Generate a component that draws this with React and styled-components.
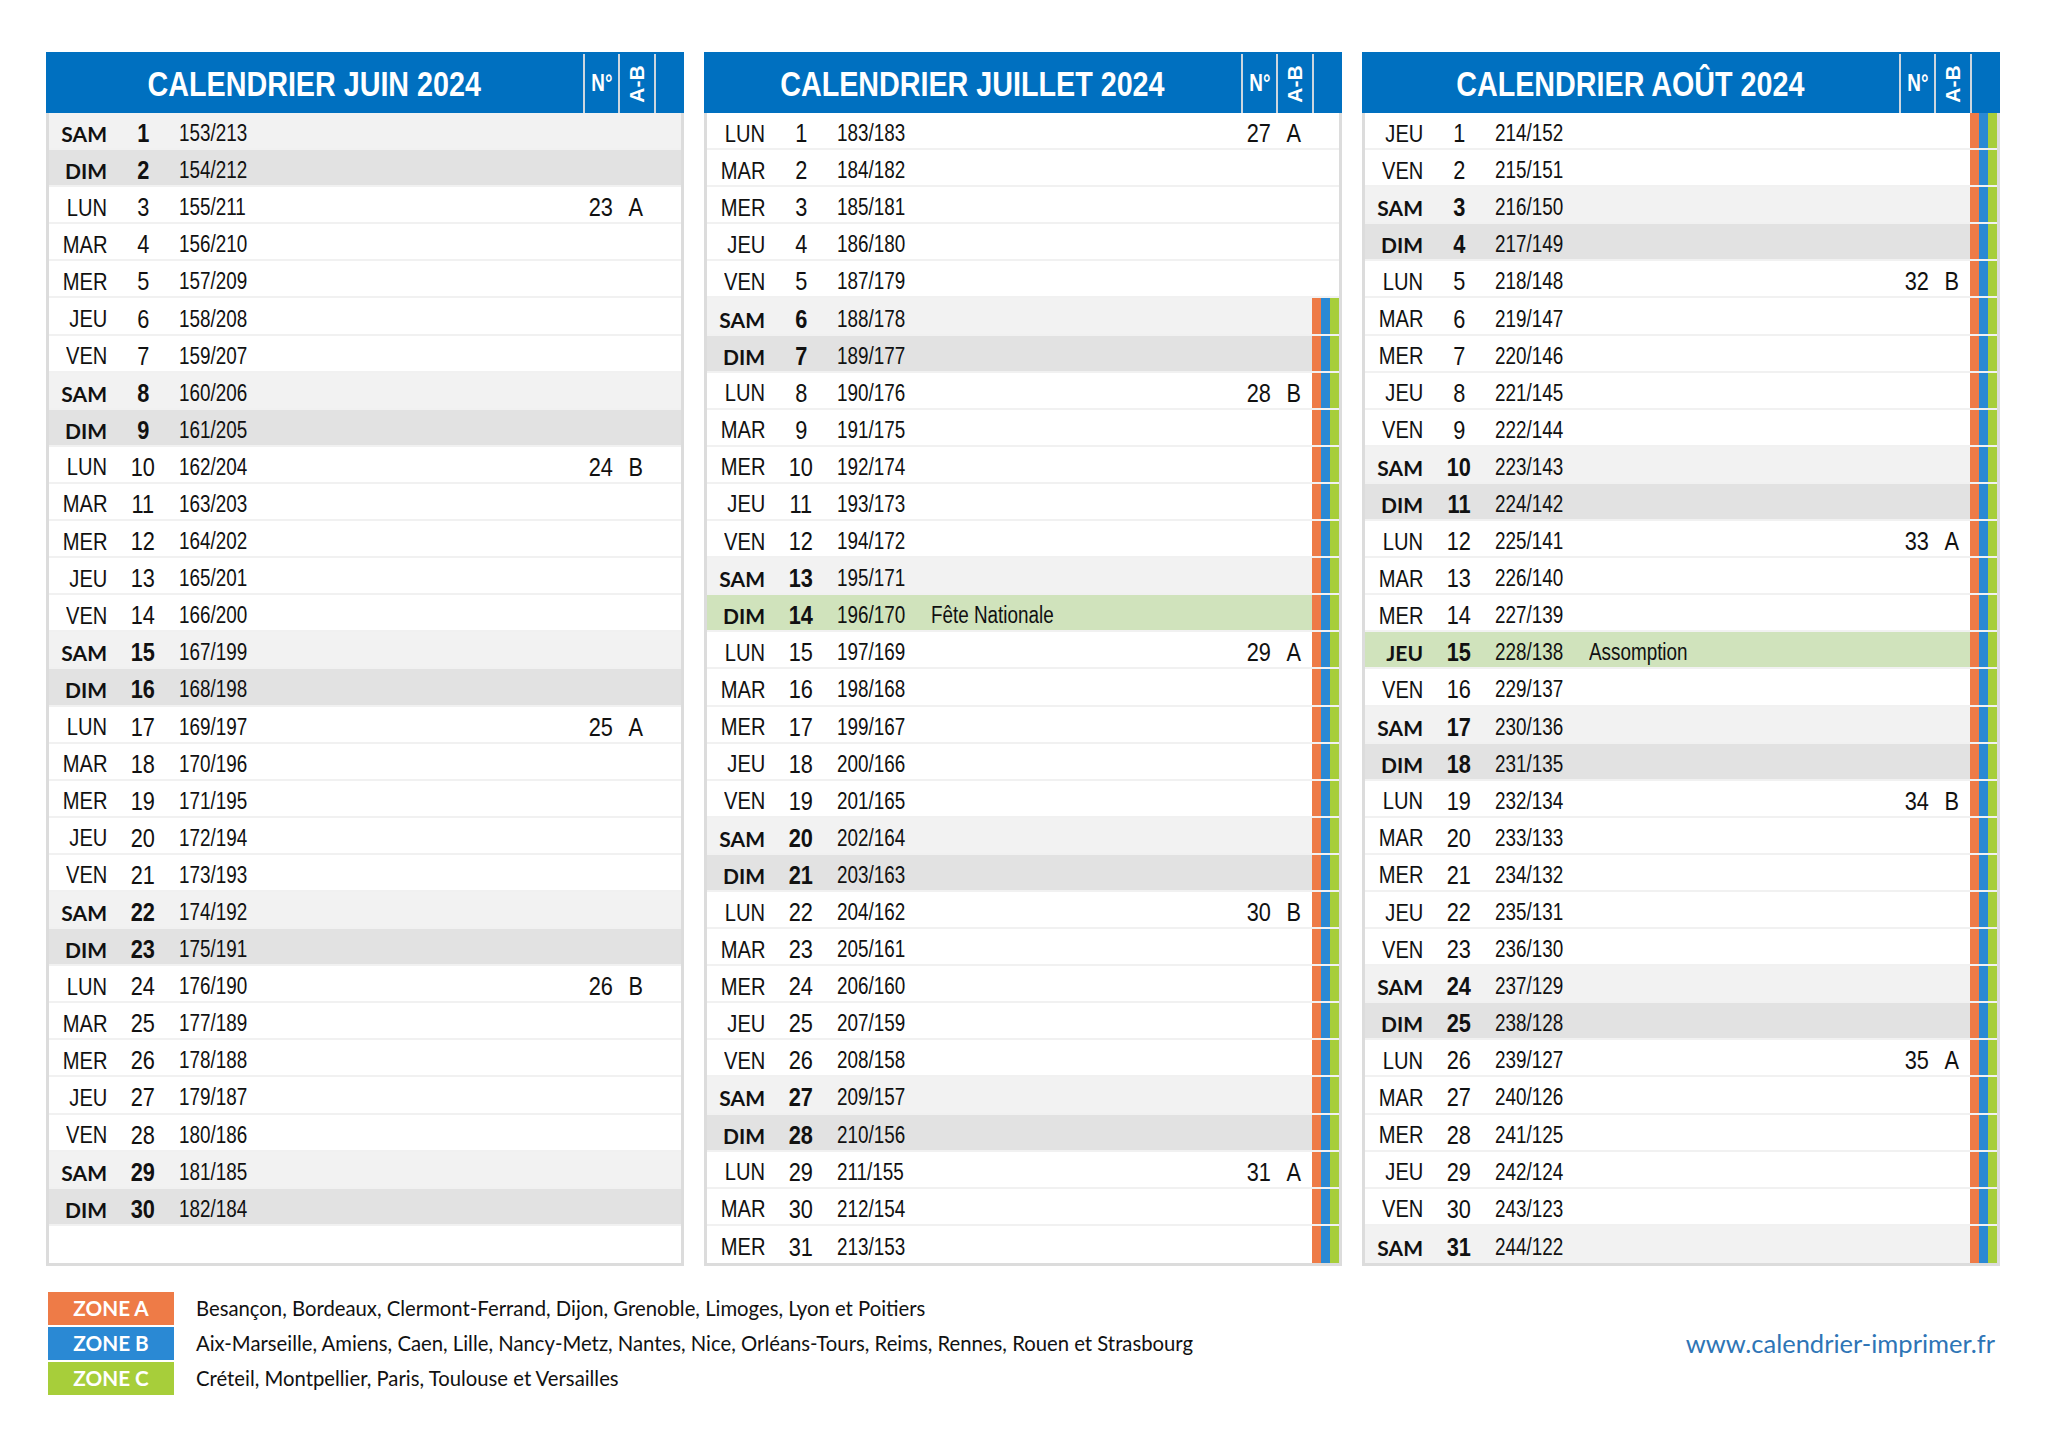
import React from "react";
import styled, { createGlobalStyle } from "styled-components";

const ARIAL = `"Liberation Sans", Arial, sans-serif`;
const CALIBRI = `Lato, "Open Sans", "Liberation Sans", sans-serif`;

const ORANGE = "#ee7b47";
const BLUE = "#2a89d4";
const GREEN = "#a7ce3a";

const GlobalStyle = createGlobalStyle`
  html, body { margin: 0; padding: 0; background: #ffffff; }
  body { font-family: ${ARIAL}; color: #111; }
`;

const Page = styled.div`
  width: 2048px;
  min-height: 1448px;
  box-sizing: border-box;
  padding: 52px 47px 0 46px;
  display: flex;
  flex-direction: column;
`;

const Panels = styled.div`
  display: grid;
  grid-template-columns: repeat(3, 638px);
  column-gap: 20px;
`;

const Panel = styled.section`
  display: flex;
  flex-direction: column;
`;

/* Arial Narrow look: condensed Liberation Sans */
const Cond = styled.span`
  display: inline-block;
  white-space: nowrap;
  transform: scaleX(0.82);
  transform-origin: ${(p) => p.$o || "left"} center;
`;

const Header = styled.header`
  height: 61px;
  background: #0070c0;
  display: flex;
  color: #fff;
`;

const Title = styled.h2`
  flex: 1;
  margin: 0;
  display: flex;
  align-items: center;
  justify-content: center;
  font-family: ${ARIAL};
  font-weight: 700;
  font-size: 35px;
  padding-top: 2px;
`;

const HeadCell = styled.div`
  width: ${(p) => p.$w}px;
  box-sizing: border-box;
  margin-top: 2px;
  border-left: 2px solid #cdd6df;
  display: flex;
  align-items: center;
  justify-content: center;
  font-family: ${ARIAL};
  font-weight: 700;
  font-size: 23px;
`;

const Rotated = styled.span`
  display: inline-block;
  transform: rotate(-90deg);
  white-space: nowrap;
  font-size: 21px;
`;

const Body = styled.div`
  border: 3px solid #dcdcdc;
  border-top: none;
  display: flex;
  flex-direction: column;
`;

const rowBg = (p) => {
  if (p.$holiday) return "#d0e3bc";
  if (p.$kind === "SAM") return "#f2f2f2";
  if (p.$kind === "DIM") return "#e2e2e2";
  return "#ffffff";
};

const Row = styled.div`
  height: 35.1px;
  border-bottom: 2px solid #f1f1f1;
  background: ${rowBg};
  display: flex;
  align-items: center;
  &:last-child { border-bottom: none; height: 37px; }
`;

const Cell = styled.div`
  padding-top: 6px;
`;

const DayName = styled(Cell)`
  width: 58px;
  text-align: right;
  font-family: ${(p) => (p.$bold ? CALIBRI : ARIAL)};
  font-weight: ${(p) => (p.$bold ? 700 : 400)};
  font-size: ${(p) => (p.$bold ? 21 : 24.5)}px;
`;

const DayNum = styled(Cell)`
  width: 44px;
  margin-left: 14px;
  text-align: center;
  font-weight: ${(p) => (p.$bold ? 700 : 400)};
  font-size: 26.5px;
`;

const Frac = styled(Cell)`
  width: 94px;
  margin-left: 14px;
  font-size: 23px;
`;

const Label = styled(Cell)`
  flex: 1;
  font-size: 23px;
`;

const Week = styled(Cell)`
  width: ${(p) => p.$w}px;
  text-align: center;
  font-size: 26.5px;
`;

const Stripes = styled.div`
  width: 27px;
  align-self: stretch;
  display: flex;
`;

const Stripe = styled.span`
  flex: 1;
  background: ${(p) => p.$c};
`;

const Legend = styled.div`
  margin-top: 26px;
  display: flex;
  align-items: center;
  justify-content: space-between;
  padding-right: 6px;
  padding-left: 2px;
`;

const Zones = styled.div`
  display: flex;
  flex-direction: column;
  gap: 2px;
`;

const ZoneRow = styled.div`
  display: flex;
  align-items: center;
  gap: 22px;
`;

const ZoneBox = styled.div`
  width: 126px;
  height: 33px;
  background: ${(p) => p.$c};
  color: #fff;
  font-family: ${CALIBRI};
  font-weight: 700;
  font-size: 20.7px;
  display: flex;
  align-items: center;
  justify-content: center;
`;

const ZoneText = styled.div`
  font-family: ${CALIBRI};
  font-size: 20.3px;
  color: #111;
`;

const Url = styled.div`
  font-family: ${CALIBRI};
  font-size: 25.5px;
  color: #2e75b6;
`;

const DAY_NAMES = ["DIM", "LUN", "MAR", "MER", "JEU", "VEN", "SAM"];

function isoWeek(date) {
  const d = new Date(Date.UTC(date.getFullYear(), date.getMonth(), date.getDate()));
  const dayNum = d.getUTCDay() || 7;
  d.setUTCDate(d.getUTCDate() + 4 - dayNum);
  const yearStart = new Date(Date.UTC(d.getUTCFullYear(), 0, 1));
  return Math.ceil(((d - yearStart) / 86400000 + 1) / 7);
}

function dayOfYear(date) {
  const start = new Date(date.getFullYear(), 0, 1);
  return Math.round((date - start) / 86400000) + 1;
}

const MONTHS = [
  { title: "CALENDRIER JUIN 2024", month: 5, days: 30, stripesFrom: null, holidays: {} },
  { title: "CALENDRIER JUILLET 2024", month: 6, days: 31, stripesFrom: 6, holidays: { 14: "Fête Nationale" } },
  { title: "CALENDRIER AOÛT 2024", month: 7, days: 31, stripesFrom: 1, holidays: { 15: "Assomption" } },
];

function buildRows(m) {
  const rows = [];
  for (let d = 1; d <= 31; d++) {
    if (d > m.days) {
      rows.push({ empty: true, key: d });
      continue;
    }
    const date = new Date(2024, m.month, d);
    const name = DAY_NAMES[date.getDay()];
    const doy = dayOfYear(date);
    const holiday = m.holidays[d];
    const weekend = name === "SAM" || name === "DIM";
    let week = null;
    let ab = null;
    if (name === "LUN") {
      week = isoWeek(date);
      ab = week % 2 === 1 ? "A" : "B";
    }
    rows.push({
      key: d,
      d,
      name,
      frac: `${doy}/${366 - doy}`,
      holiday,
      bold: weekend || !!holiday,
      week,
      ab,
      stripes: m.stripesFrom != null && d >= m.stripesFrom,
    });
  }
  return rows;
}

function MonthPanel({ m }) {
  const rows = buildRows(m);
  return (
    <Panel>
      <Header>
        <Title>
          <Cond $o="center">{m.title}</Cond>
        </Title>
        <HeadCell $w={35}>
          <Cond $o="center">N°</Cond>
        </HeadCell>
        <HeadCell $w={36}>
          <Rotated>A-B</Rotated>
        </HeadCell>
        <HeadCell $w={30} />
      </Header>
      <Body>
        {rows.map((r) =>
          r.empty ? (
            <Row key={r.key} />
          ) : (
            <Row key={r.key} $kind={r.name} $holiday={!!r.holiday}>
              <DayName $bold={r.bold}>
                {r.bold ? r.name : <Cond $o="right">{r.name}</Cond>}
              </DayName>
              <DayNum $bold={r.bold}>
                <Cond $o="center">{r.d}</Cond>
              </DayNum>
              <Frac>
                <Cond>{r.frac}</Cond>
              </Frac>
              <Label>{r.holiday ? <Cond>{r.holiday}</Cond> : null}</Label>
              <Week $w={35}>{r.week ? <Cond $o="center">{r.week}</Cond> : null}</Week>
              <Week $w={36}>{r.ab ? <Cond $o="center">{r.ab}</Cond> : null}</Week>
              <Stripes>
                {r.stripes && (
                  <>
                    <Stripe $c={ORANGE} />
                    <Stripe $c={BLUE} />
                    <Stripe $c={GREEN} />
                  </>
                )}
              </Stripes>
            </Row>
          )
        )}
      </Body>
    </Panel>
  );
}

const ZONES = [
  { label: "ZONE A", c: ORANGE, text: "Besançon, Bordeaux, Clermont-Ferrand, Dijon, Grenoble, Limoges, Lyon et Poitiers" },
  { label: "ZONE B", c: BLUE, text: "Aix-Marseille, Amiens, Caen, Lille, Nancy-Metz, Nantes, Nice, Orléans-Tours, Reims, Rennes, Rouen et Strasbourg" },
  { label: "ZONE C", c: GREEN, text: "Créteil, Montpellier, Paris, Toulouse et Versailles" },
];

export default function App() {
  return (
    <>
      <GlobalStyle />
      <Page>
        <Panels>
          {MONTHS.map((m) => (
            <MonthPanel key={m.title} m={m} />
          ))}
        </Panels>
        <Legend>
          <Zones>
            {ZONES.map((z) => (
              <ZoneRow key={z.label}>
                <ZoneBox $c={z.c}>{z.label}</ZoneBox>
                <ZoneText>{z.text}</ZoneText>
              </ZoneRow>
            ))}
          </Zones>
          <Url>www.calendrier-imprimer.fr</Url>
        </Legend>
      </Page>
    </>
  );
}
